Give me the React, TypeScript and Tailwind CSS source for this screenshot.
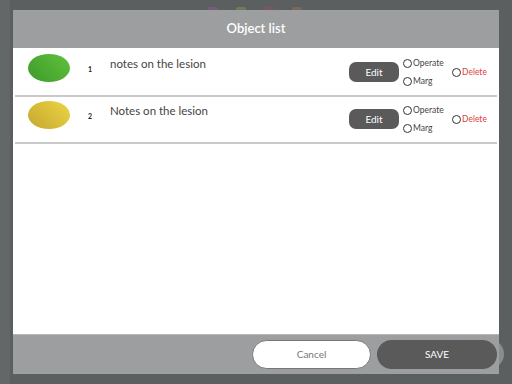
import React from "react";

const Radio = ({ label, red }: { label: string; red?: boolean }) => (
  <div className="flex items-center gap-[1px]">
    <span className="w-[9px] h-[9px] rounded-full border border-[#333] bg-white shrink-0" />
    <span className={`text-[8.5px] leading-none ${red ? "text-[#e0403a]" : "text-[#444]"}`}>{label}</span>
  </div>
);

const Row = ({ n, text, from, to }: { n: number; text: string; from: string; to: string }) => (
  <div className="mx-[2px] h-[47px] border-b-[2px] border-[#c9c9c9] flex">
    <div className="pl-[13px] pt-[4px]">
      <div
        className="w-[42px] h-[28px] rounded-[50%]"
        style={{ background: `linear-gradient(45deg, ${from}, ${to})` }}
      />
    </div>
    <div className="w-[40px] pt-[14px] text-center text-[7px] font-bold text-[#222]">{n}</div>
    <div className="flex-1 pt-[5px] text-[11.5px] text-[#444]">{text}</div>
    <div className="flex pt-[12px] h-[32px]">
      <button className="w-[50px] h-[20px] rounded-[7px] bg-[#5a5a5a] text-white text-[10px] leading-none">Edit</button>
    </div>
    <div className="flex flex-col justify-between pl-[4px] pt-[9px] h-[36px] w-[53px]">
      <Radio label="Operate" />
      <Radio label="Marg" />
    </div>
    <div className="pt-[18px] w-[45px]">
      <Radio label="Delete" red />
    </div>
  </div>
);

export default function App() {
  return (
    <div
      className="w-[512px] h-[384px] bg-[#5b5f60] pt-[10px] pl-[13px] overflow-hidden relative"
      style={{ fontFamily: "Lato, 'Open Sans', sans-serif" }}
    >
      <div className="absolute top-0 left-0 w-[10px] h-[384px] bg-[#636768]" />
      <div className="absolute top-[7px] left-[208px] flex gap-[18px]">
        <span className="w-[10px] h-[4px] rounded-full bg-[#7a5a78]" />
        <span className="w-[10px] h-[4px] rounded-full bg-[#737a55]" />
        <span className="w-[10px] h-[4px] rounded-full bg-[#7a5566]" />
        <span className="w-[10px] h-[4px] rounded-full bg-[#7a685a]" />
      </div>
      <div className="absolute top-[339px] left-[474px] w-[30px] h-[30px] rounded-full bg-[#8a8c8d]" />
      <div className="relative w-[486px] h-[364px] flex flex-col">
        <div className="h-[38px] bg-[#9d9e9f] flex items-center justify-center text-white text-[13px] font-semibold">
          Object list
        </div>
        <div className="flex-1 bg-white pt-[2px]">
          <Row n={1} text="notes on the lesion" from="#3d9a2a" to="#5fc23d" />
          <Row n={2} text="Notes on the lesion" from="#c6a630" to="#ecd543" />
        </div>
        <div className="h-[40px] bg-[#9d9e9f] border-t border-[#b8b9ba] flex items-center justify-end gap-[6px] pr-[2px]">
          <button className="w-[119px] h-[29px] rounded-full bg-white border border-[#777] text-[#777] text-[10px]">
            Cancel
          </button>
          <button className="w-[120px] h-[29px] rounded-full bg-[#5a5a5a] text-white text-[10px]">SAVE</button>
        </div>
      </div>
    </div>
  );
}
